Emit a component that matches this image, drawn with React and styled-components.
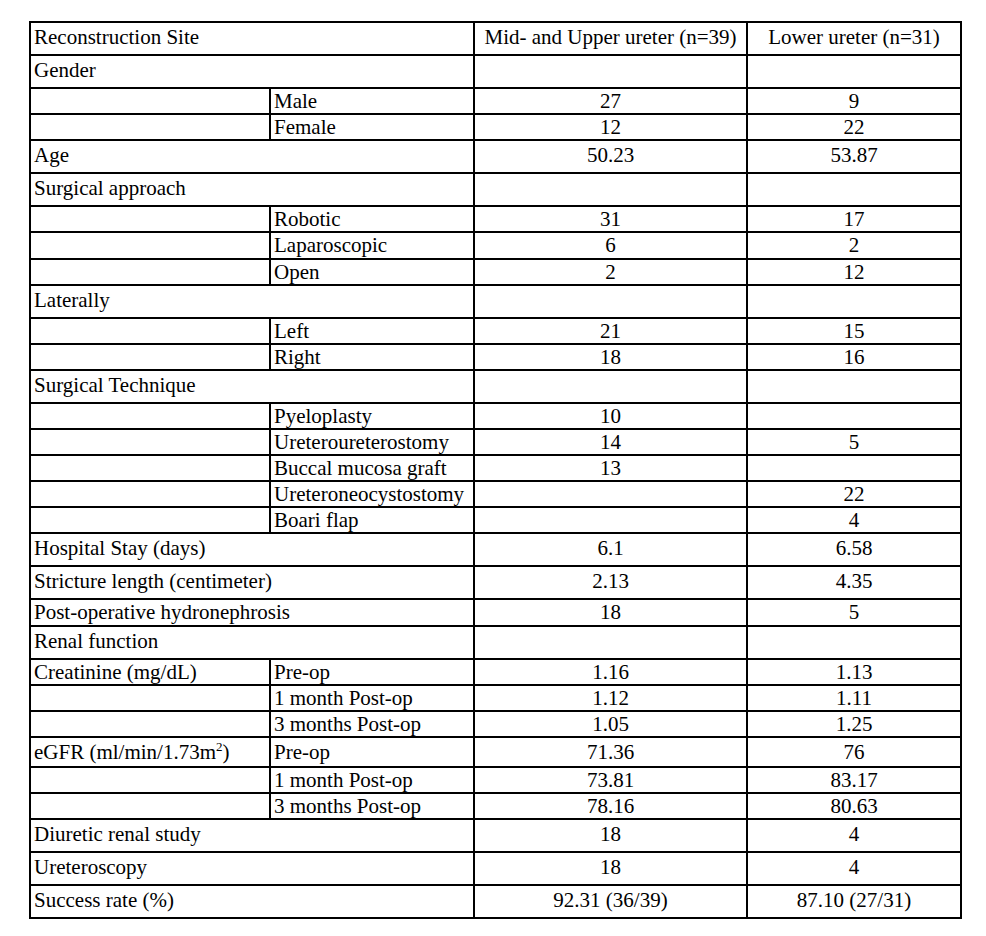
import React from "react";
import styled, { createGlobalStyle } from "styled-components";

const Global = createGlobalStyle`
  html, body { margin: 0; padding: 0; background: #ffffff; }
  body { font-family: "Liberation Serif", "Times New Roman", serif; color: #000; }
`;

const Page = styled.div`
  padding: 21px 0 0 29px;
`;

const Table = styled.table`
  border-collapse: collapse;
  table-layout: fixed;
  width: 931px;
  font-family: "Liberation Serif", "Times New Roman", serif;
  font-size: 21px;
  line-height: 24px;
`;

const Row = styled.tr`
  height: ${(p) => p.$h}px;
`;

const Cell = styled.td`
  border: 2px solid #000;
  padding: ${(p) => (p.$tall ? "2px" : "0")} 3px 0 3px;
  vertical-align: top;
  text-align: ${(p) => (p.$center ? "center" : "left")};
  white-space: nowrap;
  overflow: visible;
`;

const Sup = styled.sup`
  font-size: 13px;
  line-height: 0;
  vertical-align: 8px;
`;

const rows = [
  { t: "head", a: "Reconstruction Site", m: "Mid- and Upper ureter (n=39)", l: "Lower ureter (n=31)", h: 33 },
  { t: "head", a: "Gender", m: "", l: "", h: 33 },
  { t: "sub", b: "Male", m: "27", l: "9", h: 26 },
  { t: "sub", b: "Female", m: "12", l: "22", h: 26 },
  { t: "head", a: "Age", m: "50.23", l: "53.87", h: 33 },
  { t: "head", a: "Surgical approach", m: "", l: "", h: 33 },
  { t: "sub", b: "Robotic", m: "31", l: "17", h: 26 },
  { t: "sub", b: "Laparoscopic", m: "6", l: "2", h: 26.5 },
  { t: "sub", b: "Open", m: "2", l: "12", h: 26.5 },
  { t: "head", a: "Laterally", m: "", l: "", h: 33 },
  { t: "sub", b: "Left", m: "21", l: "15", h: 26 },
  { t: "sub", b: "Right", m: "18", l: "16", h: 26 },
  { t: "head", a: "Surgical Technique", m: "", l: "", h: 33 },
  { t: "sub", b: "Pyeloplasty", m: "10", l: "", h: 26 },
  { t: "sub", b: "Ureteroureterostomy", m: "14", l: "5", h: 26 },
  { t: "sub", b: "Buccal mucosa graft", m: "13", l: "", h: 26 },
  { t: "sub", b: "Ureteroneocystostomy", m: "", l: "22", h: 26 },
  { t: "sub", b: "Boari flap", m: "", l: "4", h: 26 },
  { t: "head", a: "Hospital Stay (days)", m: "6.1", l: "6.58", h: 33 },
  { t: "head", a: "Stricture length (centimeter)", m: "2.13", l: "4.35", h: 33 },
  { t: "head", a: "Post-operative hydronephrosis", m: "18", l: "5", h: 27 },
  { t: "head", a: "Renal function", m: "", l: "", h: 33 },
  { t: "pair", a: "Creatinine (mg/dL)", b: "Pre-op", m: "1.16", l: "1.13", h: 26 },
  { t: "sub", b: "1 month Post-op", m: "1.12", l: "1.11", h: 26 },
  { t: "sub", b: "3 months Post-op", m: "1.05", l: "1.25", h: 26 },
  { t: "pair", a: "egfr", b: "Pre-op", m: "71.36", l: "76", h: 30 },
  { t: "sub", b: "1 month Post-op", m: "73.81", l: "83.17", h: 26 },
  { t: "sub", b: "3 months Post-op", m: "78.16", l: "80.63", h: 26 },
  { t: "head", a: "Diuretic renal study", m: "18", l: "4", h: 33 },
  { t: "head", a: "Ureteroscopy", m: "18", l: "4", h: 33 },
  { t: "head", a: "Success rate (%)", m: "92.31 (36/39)", l: "87.10 (27/31)", h: 33 },
];

const label = (a) =>
  a === "egfr" ? (
    <>
      eGFR (ml/min/1.73m<Sup>2</Sup>)
    </>
  ) : (
    a
  );

export default function App() {
  return (
    <>
      <Global />
      <Page>
        <Table>
          <colgroup>
            <col style={{ width: 240 }} />
            <col style={{ width: 204 }} />
            <col style={{ width: 273 }} />
            <col style={{ width: 214 }} />
          </colgroup>
          <tbody>
            {rows.map((r, i) => {
              const tall = r.h > 27;
              return (
                <Row key={i} $h={r.h}>
                  {r.t === "head" ? (
                    <Cell colSpan={2} $tall={tall}>{label(r.a)}</Cell>
                  ) : (
                    <>
                      <Cell $tall={tall}>{r.t === "pair" ? label(r.a) : ""}</Cell>
                      <Cell $tall={tall}>{r.b}</Cell>
                    </>
                  )}
                  <Cell $center $tall={tall}>{r.m}</Cell>
                  <Cell $center $tall={tall}>{r.l}</Cell>
                </Row>
              );
            })}
          </tbody>
        </Table>
      </Page>
    </>
  );
}
